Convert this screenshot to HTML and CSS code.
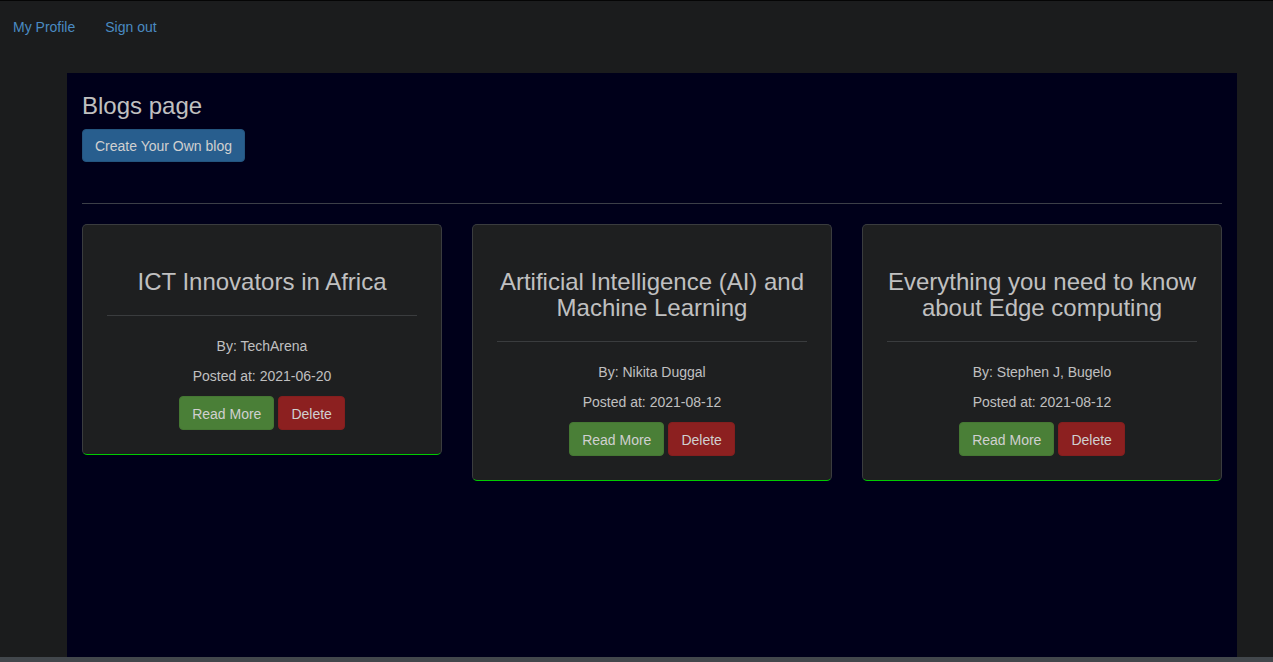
FILE: index.html
```html
<!DOCTYPE html>
<html>
<head>
<meta charset="utf-8">
<title>Blogs</title>
<link rel="stylesheet" href="styles.css">
</head>
<body>
<div class="page">
  <nav class="navbar">
    <a href="#" class="nav-link">My Profile</a>
    <a href="#" class="nav-link">Sign out</a>
  </nav>
  <main class="container">
    <h3 class="page-title">Blogs page</h3>
    <a href="#" class="btn btn-primary">Create Your Own blog</a>
    <hr class="divider">
    <div class="cards">
      <div class="card">
        <h3 class="card-title">ICT Innovators in Africa</h3>
        <hr class="card-hr">
        <p class="meta">By: TechArena</p>
        <p class="meta">Posted at: 2021-06-20</p>
        <div class="actions">
          <a href="#" class="btn btn-success">Read More</a>
          <a href="#" class="btn btn-danger">Delete</a>
        </div>
      </div>
      <div class="card">
        <h3 class="card-title">Artificial Intelligence (AI) and Machine Learning</h3>
        <hr class="card-hr">
        <p class="meta">By: Nikita Duggal</p>
        <p class="meta">Posted at: 2021-08-12</p>
        <div class="actions">
          <a href="#" class="btn btn-success">Read More</a>
          <a href="#" class="btn btn-danger">Delete</a>
        </div>
      </div>
      <div class="card">
        <h3 class="card-title">Everything you need to know about Edge computing</h3>
        <hr class="card-hr">
        <p class="meta">By: Stephen J, Bugelo</p>
        <p class="meta">Posted at: 2021-08-12</p>
        <div class="actions">
          <a href="#" class="btn btn-success">Read More</a>
          <a href="#" class="btn btn-danger">Delete</a>
        </div>
      </div>
    </div>
  </main>
  <div class="footer-bar"></div>
</div>
</body>
</html>
```

FILE: styles.css
```css
html, body {
  margin: 0;
  padding: 0;
  height: 100%;
  overflow: hidden;
}
body {
  background: #1b1c1d;
  font-family: "Liberation Sans", Arial, sans-serif;
  font-size: 14px;
  line-height: 20px;
  color: #c0c0c0;
}
.page {
  display: flex;
  flex-direction: column;
  height: 100vh;
  border-top: 1px solid #050505;
  box-sizing: border-box;
}
.navbar {
  display: flex;
  gap: 30px;
  height: 50px;
  align-items: center;
  padding-left: 13px;
  flex-shrink: 0;
}
.nav-link {
  color: #4a8bc2;
  text-decoration: none;
  font-size: 14px;
  position: relative;
  top: 1px;
}
.container {
  flex: 1;
  width: 1170px;
  box-sizing: border-box;
  margin: 22px 0 0 67px;
  padding: 0 15px;
  background: #00001a;
}
.page-title {
  margin: 20px 0 10px;
  font-size: 24px;
  line-height: 26px;
  font-weight: 400;
  color: #c0c0c0;
}
.btn {
  display: inline-block;
  box-sizing: border-box;
  height: 34px;
  padding: 7px 12px;
  font-size: 14px;
  line-height: 20px;
  border-radius: 4px;
  text-decoration: none;
  color: #d0d0d0;
  border: 1px solid transparent;
}
.btn-primary {
  background: #285e8e;
  border-color: #24557f;
  height: 33px;
  padding: 6px 12px;
}
.btn-success {
  background: #4a7f37;
  border-color: #457733;
}
.btn-danger {
  background: #8c2020;
  border-color: #841e1e;
}
.divider {
  margin: 41px 0 20px;
  border: 0;
  border-top: 1px solid #3c3f48;
}
.cards {
  display: grid;
  grid-template-columns: repeat(3, 360px);
  column-gap: 30px;
  align-items: start;
}
.card {
  background: #1e1f20;
  border: 1px solid #3a3c3e;
  border-bottom: 1px solid #00cc00;
  border-radius: 5px;
  padding: 24px;
  text-align: center;
}
.card-title {
  margin: 20px 0 0;
  font-size: 24px;
  line-height: 26px;
  font-weight: 400;
  color: #c0c0c0;
}
.card-hr {
  margin: 20px 0;
  border: 0;
  border-top: 1px solid #3a3c3e;
}
.meta {
  margin: 0 0 10px;
}
.actions {
  display: flex;
  justify-content: center;
  gap: 4px;
}
.footer-bar {
  height: 5px;
  background: #42474c;
  flex-shrink: 0;
}
```
